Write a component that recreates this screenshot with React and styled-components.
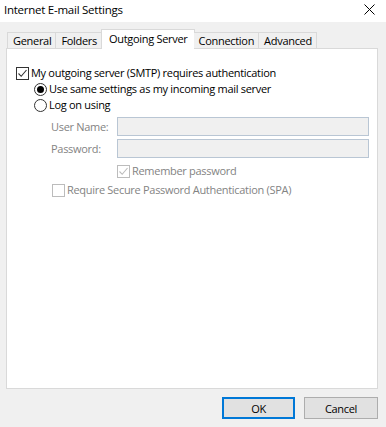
import styled, { createGlobalStyle } from "styled-components";

const GlobalStyle = createGlobalStyle`
  html, body {
    margin: 0;
    padding: 0;
    background: #f0f0f0;
  }
  body {
    font-family: "Open Sans", "Noto Sans", sans-serif;
    font-size: 11px;
    letter-spacing: -0.3px;
    color: #000;
  }
`;

const tabs = ["General", "Folders", "Outgoing Server", "Connection", "Advanced"];

const CheckBox = ({ checked, disabled }) => (
  <Box disabled={disabled}>
    {checked && (
      <svg width="11" height="11" viewBox="0 0 11 11">
        <path d="M1.5 5.5 L4.2 8.3 L9.5 2" fill="none" stroke={disabled ? "#bcbcbc" : "#333"} strokeWidth="1.1" />
      </svg>
    )}
  </Box>
);

const App = () => {
  return (
    <Window>
      <GlobalStyle />
      <TitleBar>
        <Title>Internet E-mail Settings</Title>
        <Close>
          <svg width="11" height="11" viewBox="0 0 11 11">
            <path d="M0.5 0.5 L10.5 10.5 M10.5 0.5 L0.5 10.5" stroke="#000" strokeWidth="1" />
          </svg>
        </Close>
      </TitleBar>
      <Content>
        <TabStrip>
          {tabs.map((t) => (
            <Tab key={t} active={t === "Outgoing Server"}>{t}</Tab>
          ))}
        </TabStrip>
        <Panel>
          <Row top={17}>
            <CheckBox checked />
            <Label>My outgoing server (SMTP) requires authentication</Label>
          </Row>
          <Row indent={18} top={2}>
            <Radio checked />
            <Label>Use same settings as my incoming mail server</Label>
          </Row>
          <Row indent={18} top={2}>
            <Radio />
            <Label>Log on using</Label>
          </Row>
          <Fields>
            <FieldLabel>User Name:</FieldLabel>
            <Input />
            <FieldLabel>Password:</FieldLabel>
            <Input />
          </Fields>
          <Row indent={101} top={6}>
            <CheckBox checked disabled />
            <Label disabled>Remember password</Label>
          </Row>
          <Row indent={36} top={5}>
            <CheckBox disabled />
            <Label disabled>Require Secure Password Authentication (SPA)</Label>
          </Row>
        </Panel>
        <Footer>
          <Button primary>OK</Button>
          <Button>Cancel</Button>
        </Footer>
      </Content>
    </Window>
  );
};

const Window = styled.div`
  width: 386px;
  height: 427px;
  background: #f0f0f0;
  display: flex;
  flex-direction: column;
`;

const TitleBar = styled.div`
  height: 22px;
  background: #fff;
  display: flex;
  align-items: center;
  justify-content: space-between;
  padding: 0 11px 0 4px;
`;

const Title = styled.span`
  font-size: 11.5px;
  letter-spacing: -0.25px;
  margin-top: -3px;
`;

const Close = styled.span`
  display: flex;
  margin-top: -3px;
`;

const Content = styled.div`
  padding: 8px 8px 0 6px;
  display: flex;
  flex-direction: column;
`;

const TabStrip = styled.div`
  display: flex;
  align-items: flex-end;
  height: 19px;
  padding-left: 1px;
  position: relative;
  z-index: 1;
  margin-bottom: -1px;
`;

const Tab = styled.div`
  height: ${({ active }) => (active ? "20px" : "17px")};
  box-sizing: border-box;
  border: 1px solid #d9d9d9;
  border-bottom: ${({ active }) => (active ? "none" : "1px solid #d9d9d9")};
  border-left: ${({ active }) => (active ? "1px solid #d9d9d9" : "none")};
  background: ${({ active }) => (active ? "#fff" : "#f0f0f0")};
  padding: ${({ active }) => (active ? "0 6px 0 7px" : "0 4px 0 5px")};
  margin: ${({ active }) => (active ? "0 -1px 0 -1px" : "0")};
  display: flex;
  align-items: ${({ active }) => (active ? "flex-start" : "center")};
  line-height: 17px;
  white-space: nowrap;
  &:first-child {
    border-left: 1px solid #d9d9d9;
  }
`;

const Panel = styled.div`
  height: 341px;
  box-sizing: border-box;
  border: 1px solid #d9d9d9;
  background: #fff;
  padding: 0 8px 0 9px;
  display: flex;
  flex-direction: column;
`;

const Row = styled.div`
  display: flex;
  align-items: center;
  height: 14px;
  margin-top: ${({ top }) => top || 0}px;
  padding-left: ${({ indent }) => indent || 0}px;
  gap: 2px;
`;

const Label = styled.span`
  color: ${({ disabled }) => (disabled ? "#838383" : "#000")};
  white-space: nowrap;
  line-height: 14px;
`;

const Box = styled.span`
  width: 13px;
  height: 13px;
  box-sizing: border-box;
  border: 1px solid ${({ disabled }) => (disabled ? "#bcbcbc" : "#333")};
  background: #fff;
  display: flex;
  align-items: center;
  justify-content: center;
  flex-shrink: 0;
`;

const Radio = styled.span`
  width: 13px;
  height: 13px;
  box-sizing: border-box;
  border: 1px solid #333;
  border-radius: 50%;
  background: #fff;
  display: flex;
  align-items: center;
  justify-content: center;
  flex-shrink: 0;
  &::after {
    content: "";
    display: ${({ checked }) => (checked ? "block" : "none")};
    width: 7px;
    height: 7px;
    border-radius: 50%;
    background: #000;
  }
`;

const Fields = styled.div`
  display: grid;
  grid-template-columns: 66px 1fr;
  row-gap: 3px;
  align-items: center;
  padding-left: 35px;
  margin-top: 5px;
`;

const FieldLabel = styled.span`
  color: #838383;
  white-space: nowrap;
`;

const Input = styled.div`
  height: 19px;
  box-sizing: border-box;
  border: 1px solid #b9c6d4;
  background: #f0f0f0;
`;

const Footer = styled.div`
  display: flex;
  justify-content: flex-end;
  gap: 9px;
  margin-top: 8px;
  padding-right: 0;
`;

const Button = styled.button`
  width: ${({ primary }) => (primary ? "73px" : "74px")};
  height: 22px;
  box-sizing: border-box;
  border: ${({ primary }) => (primary ? "2px solid #0078d7" : "1px solid #adadad")};
  background: #e1e1e1;
  font-family: "Open Sans", "Noto Sans", sans-serif;
  font-size: 11px;
  letter-spacing: -0.3px;
  color: #000;
  padding: 0;
  display: flex;
  align-items: center;
  justify-content: center;
`;

export default App;
